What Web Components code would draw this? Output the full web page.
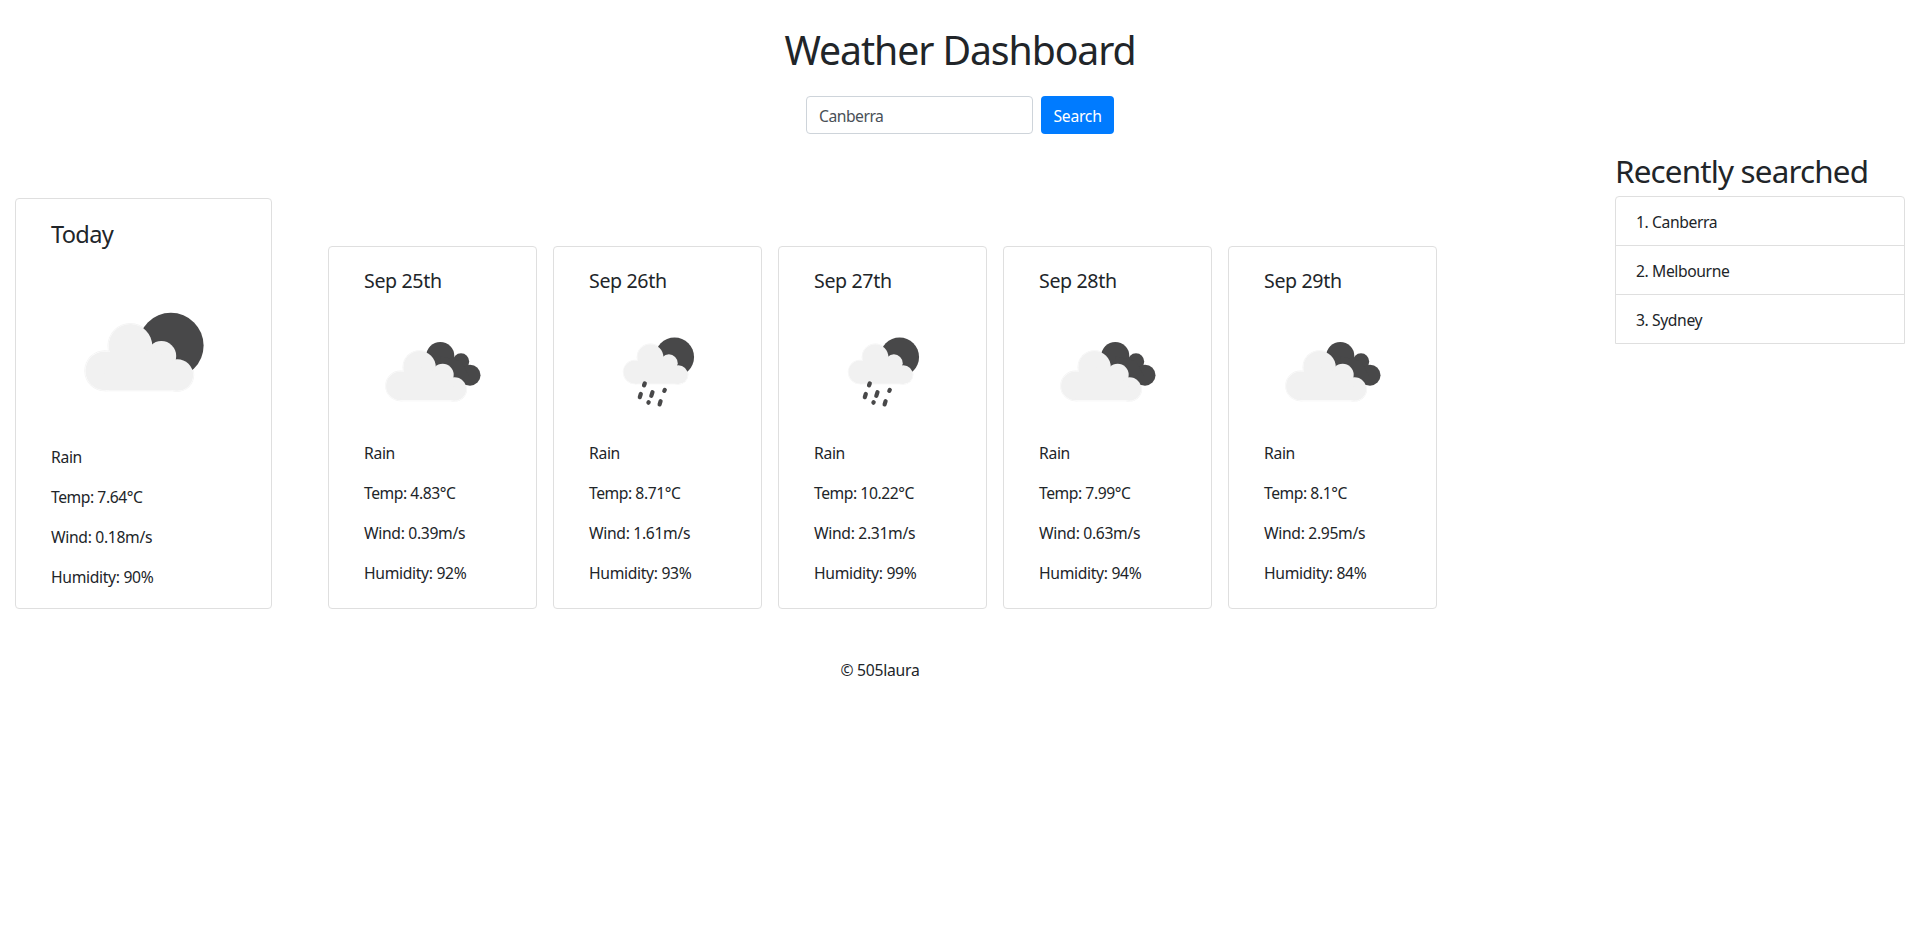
<!DOCTYPE html>
<html lang="en">
<head>
<meta charset="utf-8">
<title>Weather Dashboard</title>
<style>
body { margin: 0; background: #fff; color: #212529; font: 15.7px/24px "Segoe UI", "Noto Sans", "Open Sans", sans-serif; }
</style>
</head>
<body>
<weather-dashboard></weather-dashboard>
<script>
const define = (name, html) => customElements.define(name, class extends HTMLElement {
  constructor() {
    super();
    this.attachShadow({ mode: 'open' }).innerHTML = '<style>*{box-sizing:border-box}h1,h2,h3,p{margin:0;font-weight:400}</style>' + (typeof html === 'function' ? html(this) : html);
  }
});

// The cloud silhouette, inset by d so that concentric copies form its soft rim.
const shapes = (d, fill) => `<g fill="${fill}"><circle cx="20.4" cy="47.5" r="${20.4 - d}"/><circle cx="46" cy="22.6" r="${22.8 - d}"/><circle cx="77" cy="32.6" r="${15.8 - d}"/><circle cx="92.9" cy="51.7" r="${16.8 - d}"/><path d="M20 47L45 22L77 31L93 50V${67.9 - d}H20.4z"/></g>`;
const rim = shapes(-.1, '#f3f3f3') + shapes(.6, '#fff');
const fill = shapes(1, '#f1f1f1');
const moon = `${rim}<circle cx="86.5" cy="22.2" r="32.7" fill="#484849"/>${fill}`;
const front = s => `<g transform="translate(21.3 47.5) scale(.745)">${s}</g>`;
const icons = {
  'few-clouds': `<svg viewBox="0 0 185 185"><g transform="translate(33.4 64.3)">${moon}</g></svg>`,
  'clouds': `<svg viewBox="0 0 137 137">${front(rim)}<g fill="#484849"><circle cx="76.3" cy="53" r="14"/><circle cx="97" cy="58.5" r="8.2"/><circle cx="106" cy="72.2" r="10.5"/><path d="M76 53L97 58L106 75V82H80z"/></g>${front(fill)}</svg>`,
  'rain': `<svg viewBox="0 0 137 137"><g transform="translate(33.9 40.7) scale(.597)">${moon}</g><g stroke="#484849" stroke-width="4.2" stroke-linecap="round"><path d="M55.8 80.4L55 82.4M51.8 91L50.8 94.2M63.5 89.2L62.3 92.8M75.8 86.9L75.3 87.9M59.7 99.2L59.4 99.7M71.6 98.2L70.6 101.4"/></g></svg>`
};

define('weather-icon', el => '<style>:host{display:block}svg{display:block;width:100%}</style>' + icons[el.getAttribute('kind')]);

define('weather-card', `<style>
:host{display:block;box-sizing:border-box;width:209px;height:363px;border:1px solid #dfdfdf;border-radius:4px;padding:21px 35px 0}
:host([today]){width:257px;height:411px;padding-top:20px}
.title{display:block;height:35px;font-size:19.6px;line-height:26px;letter-spacing:-.36px;white-space:nowrap}
:host([today]) .title{height:40px;font-size:23.6px;line-height:30px;letter-spacing:-.7px}
.lines{display:flex;flex-direction:column;gap:16px;white-space:nowrap;letter-spacing:-.33px;padding-top:1px}
</style>
<h3 class="title"><slot name="title"></slot></h3>
<slot name="icon"></slot>
<div class="lines"><slot></slot></div>`);

define('search-form', `<style>
:host{display:flex;gap:8px;justify-content:center}
input{width:227px;height:38px;border:1px solid #ced4da;border-radius:4px;padding:2px 12px 0;font:inherit;letter-spacing:-.5px;color:#495057;background:#fff;outline:0}
button{width:73px;height:38px;border:0;border-radius:4px;background:#007bff;color:#fff;font:inherit;letter-spacing:-.25px;padding:2px 0 0}
</style><input value="Canberra" aria-label="City"><button>Search</button>`);

define('recent-searches', `<style>
:host{display:block;width:290px}
h2{font-size:31.4px;line-height:37px;height:44px;letter-spacing:-.82px;white-space:nowrap}
.list{border:1px solid #dfdfdf;border-radius:4px 4px 0 0}
::slotted(div){height:49px;padding:13px 20px 0;box-sizing:border-box;letter-spacing:-.4px;border-bottom:1px solid #dfdfdf}
::slotted(div:last-of-type){height:48px;border-bottom:0}
</style><h2>Recently searched</h2><div class="list"><slot></slot></div>`);

const days = [
  ['25th', 'clouds', '4.83', '0.39', '92'], ['26th', 'rain', '8.71', '1.61', '93'],
  ['27th', 'rain', '10.22', '2.31', '99'], ['28th', 'clouds', '7.99', '0.63', '94'],
  ['29th', 'clouds', '8.1', '2.95', '84']
];
const card = (title, icon, temp, wind, humidity, attr = '') => `<weather-card ${attr}><span slot="title">${title}</span><weather-icon slot="icon" kind="${icon}"></weather-icon><div>Rain</div><div class="temp">Temp: ${temp}°C</div><div>Wind: ${wind}m/s</div><div>Humidity: ${humidity}%</div></weather-card>`;

define('weather-dashboard', () => `<style>
:host{display:block;height:927px;overflow:hidden}
header{padding-top:26px;height:152px}
h1{font-size:39.2px;line-height:48px;height:70px;text-align:center;letter-spacing:-1.08px}
main{display:flex;justify-content:space-between;padding:0 15px;height:457px}
.cards{display:flex;align-items:flex-end}
.days{display:flex;gap:16px;margin-left:56px}
.temp{letter-spacing:-.45px}
footer{width:1760px;text-align:center;padding-top:49px;letter-spacing:-.25px}
</style>
<header><h1>Weather Dashboard</h1><search-form></search-form></header>
<main><div class="cards">${card('Today', 'few-clouds', '7.64', '0.18', '90', 'today')}<div class="days">${days.map(([d, ...r]) => card('Sep ' + d, ...r)).join('')}</div></div>
<recent-searches><div>1. Canberra</div><div>2. Melbourne</div><div>3. Sydney</div></recent-searches></main>
<footer>© 505laura</footer>`);
</script>
</body>
</html>
